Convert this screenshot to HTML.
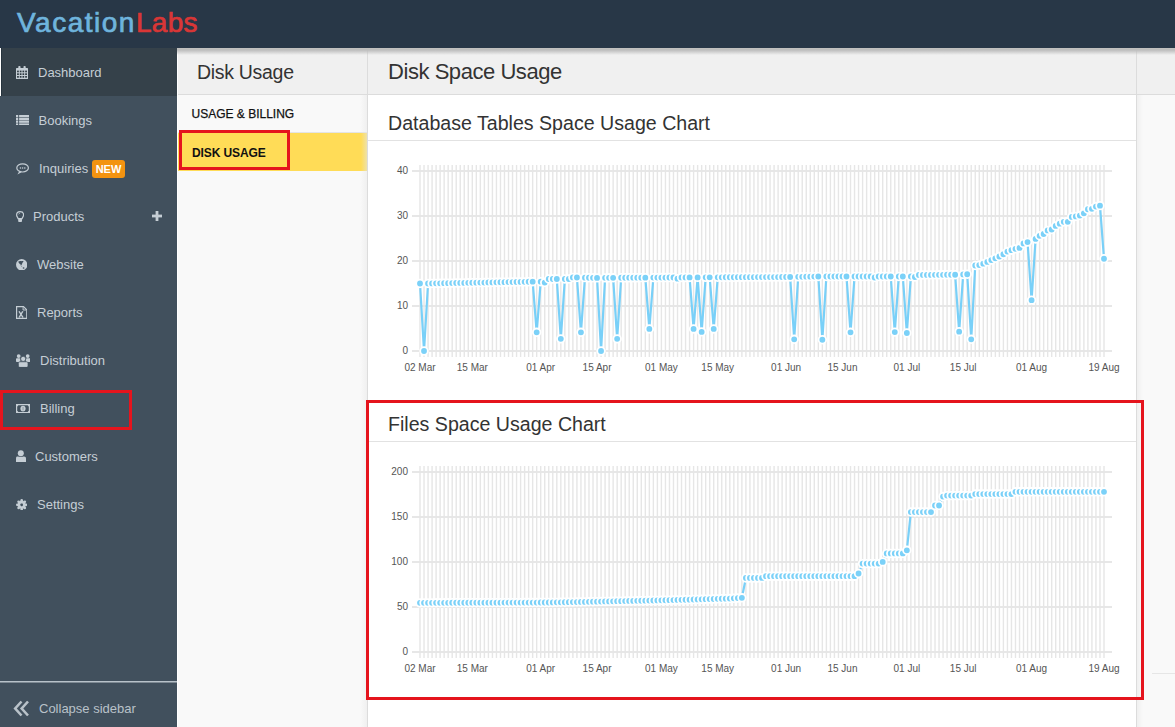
<!DOCTYPE html>
<html><head><meta charset="utf-8">
<style>
*{box-sizing:border-box;margin:0;padding:0}
html,body{width:1175px;height:727px;overflow:hidden;background:#f9f9f9;font-family:"Liberation Sans",sans-serif}
#hdr{position:absolute;left:0;top:0;width:1175px;height:48px;background:#283747;z-index:5}
#logo{position:absolute;left:17px;top:7px;font-weight:normal;white-space:nowrap;font-size:28px;line-height:32px;-webkit-text-stroke:0.7px}
#logo .v{color:#6fb4dd;letter-spacing:1.5px;-webkit-text-stroke-color:#6fb4dd}
#logo .l{color:#d93636;letter-spacing:0.3px;-webkit-text-stroke-color:#d93636}
#side{position:absolute;left:0;top:48px;width:177px;height:679px;background:#41505d}
.it{position:absolute;left:0;width:177px;height:48px;color:#c5ced5;font-size:13px}
.it span.t{position:absolute;top:17px;line-height:16px;white-space:nowrap}
.it svg{position:absolute}
.it.act{background:#35414a;border-left:1px solid #fff;box-shadow:inset 1px 0 0 #26333d}
#badge{position:absolute;left:92px;top:16px;width:33px;height:18px;background:#f39310;border-radius:3px;color:#fff;font-weight:bold;font-size:11px;line-height:18px;text-align:center}
#collapse{position:absolute;left:0;top:633px;width:177px;height:46px;border-top:1px solid #b8c2ca;box-shadow:inset 0 1px 0 #7e8a94;color:#b9c2c9;font-size:13px}
#col2{position:absolute;left:177px;top:48px;width:190px;height:679px;background:linear-gradient(90deg,#f9f9f9 0,#f9f9f9 182px,#f0f0f0 189px);border-left:1px solid #fff}
#col2 .h{position:absolute;left:0;top:0;width:190px;height:47px;background:#f0f0f0;border-bottom:1px solid #dcdcdc;font-size:19.5px;letter-spacing:-0.3px;color:#333;padding-left:19px;line-height:49px}
#col2 .a{position:absolute;left:13.5px;font-size:12px;color:#111;white-space:nowrap}
#yel{position:absolute;left:0;top:84px;width:189px;height:39px;border-top:1px solid #e4e4e4;background:linear-gradient(90deg,#ffdc57 0,#ffdc57 183px,#efe2a8 189px)}
#main{position:absolute;left:367px;top:48px;width:770px;height:679px;background:#fff;border-left:1px solid #dcdcdc;border-right:1px solid #dcdcdc}
#main .h{position:absolute;left:0;top:0;width:768px;height:47px;background:#f0f0f0;border-bottom:1px solid #dcdcdc;font-size:22px;letter-spacing:-0.45px;color:#333;padding-left:20px;line-height:47px}
.ct{position:absolute;left:0;width:768px;height:46px;border-bottom:1px solid #e2e2e2;font-size:19.6px;color:#333;padding-left:21px}
.ct span{position:absolute;left:20px;top:16.5px;line-height:22px;white-space:nowrap}
#right{position:absolute;left:1137px;top:48px;width:38px;height:679px;background:#f9f9f9}
#shadow{position:absolute;left:177px;top:48px;width:998px;height:7px;background:linear-gradient(#c2c1bf 0,#bdbdbd 2px,rgba(240,240,240,0) 7px);z-index:4}
#svg{position:absolute;left:0;top:0;z-index:3}
.hg{stroke:#e7e7e7;stroke-width:2}
.vg{stroke:#e6e6e6;stroke-width:1.4}
.yl,.xl{font-family:"Liberation Sans",sans-serif;font-size:10px;fill:#555}
.ln{fill:none;stroke:#79d0f8;stroke-width:2.2;stroke-linejoin:round}
.pt{fill:#7bd1f8;stroke:#fff;stroke-width:1.8}
.red{position:absolute;border:3px solid #e5141d;z-index:6}
</style></head><body>
<div id="hdr"><div id="logo"><span class="v">Vacation</span><span class="l">Labs</span></div></div>
<div id="side">
  <div class="it act" style="top:0"><svg style="left:15px;top:18px" width="12" height="13" viewBox="0 0 12 13"><rect x="0" y="2" width="12" height="11" rx=".6" fill="#c5ced5"/><g fill="#2c3840"><rect x="1.1" y="4.6" width="1.7" height="1.7"/><rect x="3.8" y="4.6" width="1.7" height="1.7"/><rect x="6.5" y="4.6" width="1.7" height="1.7"/><rect x="9.2" y="4.6" width="1.7" height="1.7"/><rect x="1.1" y="7.3" width="1.7" height="1.7"/><rect x="3.8" y="7.3" width="1.7" height="1.7"/><rect x="6.5" y="7.3" width="1.7" height="1.7"/><rect x="9.2" y="7.3" width="1.7" height="1.7"/><rect x="1.1" y="10" width="1.7" height="1.7"/><rect x="3.8" y="10" width="1.7" height="1.7"/><rect x="6.5" y="10" width="1.7" height="1.7"/><rect x="9.2" y="10" width="1.7" height="1.7"/></g><g fill="#c5ced5"><rect x="2.3" y="0" width="2.2" height="3.4" rx=".8"/><rect x="7.5" y="0" width="2.2" height="3.4" rx=".8"/></g></svg><span class="t" style="left:37px">Dashboard</span></div>
  <div class="it" style="top:48px"><svg style="left:16px;top:18.7px" width="13" height="10.5" viewBox="0 0 13 10.5"><g fill="#c5ced5"><rect x="0" y="0" width="2.2" height="2.4"/><rect x="3.1" y="0" width="9.9" height="2.4"/><rect x="0" y="3" width="2.2" height="2.2"/><rect x="3.1" y="3" width="9.9" height="2.2"/><rect x="0" y="5.6" width="2.2" height="2.2"/><rect x="3.1" y="5.6" width="9.9" height="2.2"/><rect x="0" y="8.4" width="2.2" height="2.1"/><rect x="3.1" y="8.4" width="9.9" height="2.1"/></g></svg><span class="t" style="left:38.5px">Bookings</span></div>
  <div class="it" style="top:96px"><svg style="left:16px;top:19px" width="13" height="12" viewBox="0 0 13 12"><ellipse cx="6.6" cy="4.9" rx="5.8" ry="4.1" fill="none" stroke="#c5ced5" stroke-width="1.2"/><path d="M3.3 8.2L1.4 11.4 5.6 9.3z" fill="#c5ced5"/><circle cx="4.4" cy="5" r=".8" fill="#c5ced5"/><circle cx="6.6" cy="5" r=".8" fill="#c5ced5"/><circle cx="8.8" cy="5" r=".8" fill="#c5ced5"/></svg><span class="t" style="left:39px">Inquiries</span><div id="badge">NEW</div></div>
  <div class="it" style="top:144px"><svg style="left:16px;top:18.5px" width="8.2" height="11.5" viewBox="0 0 8.2 11.5"><path d="M4.1.6C2.1.6.6 2.1.6 3.9c0 1.5 1.2 2.4 1.5 3.7h4C6.4 6.3 7.6 5.4 7.6 3.9 7.6 2.1 6.1.6 4.1.6z" fill="none" stroke="#c5ced5" stroke-width="1.2"/><path d="M2.2 7.4h3.8v2.6c0 .8-.9 1.5-1.9 1.5s-1.9-.7-1.9-1.5z" fill="#c5ced5"/><path d="M2.6 3.3c.3-.8.9-1.2 1.6-1.3" stroke="#c5ced5" stroke-width=".8" fill="none"/></svg><span class="t" style="left:33px">Products</span><svg style="left:152px;top:19px" width="10" height="10" viewBox="0 0 10 10"><rect x="3.6" y="0" width="2.8" height="10" fill="#c5ced5"/><rect x="0" y="3.6" width="10" height="2.8" fill="#c5ced5"/></svg></div>
  <div class="it" style="top:192px"><svg style="left:16px;top:18.6px" width="11.4" height="11.6" viewBox="0 0 11.4 11.6"><circle cx="5.7" cy="5.8" r="5.7" fill="#c5ced5"/><path d="M2.3 2.6c.9-.7 1.9-.8 2.7-.5.9.2 1.7-.4 2.6.2-.2.6-.8 1-1.1 1.5-.5.8-.5 1.8-1.2 2.5-.6-.5-1-1.3-1.7-1.6C2.9 4.4 2.5 3.6 2.3 2.6z" fill="#41505d"/><ellipse cx="7.6" cy="9" rx=".9" ry=".7" fill="#41505d"/><path d="M4.6 6.5l1.6 1.3" stroke="#41505d" stroke-width=".5"/></svg><span class="t" style="left:37px">Website</span></div>
  <div class="it" style="top:240px"><svg style="left:16px;top:18px" width="11.4" height="13" viewBox="0 0 11.4 13"><path d="M.6.6h6.9l3.3 3.3v8.5H.6z" fill="none" stroke="#c5ced5" stroke-width="1.2"/><path d="M7.1 1.2v2.8h2.9" fill="none" stroke="#c5ced5" stroke-width="1"/><path d="M3.2 5.6l3.6 5.6 M6.6 5.6L3.3 11.2" stroke="#c5ced5" stroke-width="1.3"/><path d="M2.6 11.2h1.6 M5.9 11.2h1.6 M2.6 5.6h1.4 M6 5.6h1.4" stroke="#c5ced5" stroke-width=".7"/></svg><span class="t" style="left:37px">Reports</span></div>
  <div class="it" style="top:288px"><svg style="left:16px;top:17.5px" width="14.4" height="13.6" viewBox="0 0 14.4 13.6"><g fill="#c5ced5"><circle cx="2.7" cy="2.1" r="1.9"/><circle cx="11.7" cy="2.1" r="1.9"/><rect x="0" y="4.2" width="4.4" height="3.8" rx=".8"/><rect x="10" y="4.2" width="4.4" height="3.8" rx=".8"/></g><circle cx="7.2" cy="4.9" r="2.6" fill="#c5ced5" stroke="#41505d" stroke-width=".8"/><rect x="2.4" y="7.8" width="9.6" height="5.6" rx="1.4" fill="#c5ced5" stroke="#41505d" stroke-width=".7"/></svg><span class="t" style="left:40px">Distribution</span></div>
  <div class="it" style="top:336px"><svg style="left:16px;top:19.6px" width="14" height="9.2" viewBox="0 0 14 9.2"><rect x="0" y="0" width="14" height="9.2" fill="#c5ced5"/><path d="M2.3 1.2h9.4l1.1 1.6v3.6l-1.1 1.6H2.3L1.2 6.4V2.8z" fill="#41505d"/><ellipse cx="7" cy="4.6" rx="2.6" ry="2.9" fill="#c5ced5"/><rect x="6.6" y="2.9" width=".9" height="3.4" fill="#41505d" opacity=".45"/></svg><span class="t" style="left:40px">Billing</span></div>
  <div class="it" style="top:384px"><svg style="left:16px;top:18px" width="10" height="12" viewBox="0 0 10 12"><g fill="#c5ced5"><circle cx="4.8" cy="3.2" r="3"/><path d="M1.5 6.6h6.6C9.3 6.6 10 7.4 10 8.6V12H0V8.2C0 7.3.6 6.6 1.5 6.6z"/></g><path d="M2.5 6.5h4.6" stroke="#41505d" stroke-width=".5"/></svg><span class="t" style="left:35px">Customers</span></div>
  <div class="it" style="top:432px"><svg style="left:16px;top:18.6px" width="11.4" height="11.6" viewBox="0 0 12 12"><g fill="#c5ced5" transform="translate(6 6)"><circle r="4.2"/><circle cx="0" cy="-4.6" r="1.4"/><circle cx="0" cy="4.6" r="1.4"/><circle cx="-4.6" cy="0" r="1.4"/><circle cx="4.6" cy="0" r="1.4"/><circle cx="3.25" cy="3.25" r="1.4"/><circle cx="-3.25" cy="3.25" r="1.4"/><circle cx="3.25" cy="-3.25" r="1.4"/><circle cx="-3.25" cy="-3.25" r="1.4"/></g><rect x="4.7" y="4.6" width="2.6" height="2.8" rx=".8" fill="#41505d"/></svg><span class="t" style="left:37px">Settings</span></div>
  <div id="collapse"><svg style="position:absolute;left:13px;top:18px" width="17" height="17" viewBox="0 0 17 17"><path d="M8.5 1.5L2.2 8.5l6.3 7 M15 1.5L8.7 8.5l6.3 7" fill="none" stroke="#b9c2c9" stroke-width="2.6"/></svg><span style="position:absolute;left:39px;top:19px;line-height:16px;white-space:nowrap">Collapse sidebar</span></div>
</div>
<div id="col2">
  <div class="h">Disk Usage</div>
  <div class="a" style="top:58px;line-height:16px;-webkit-text-stroke:0.25px #111">USAGE &amp; BILLING</div>
  <div id="yel"></div>
  <div class="a" style="top:97px;left:14px;line-height:16px;font-weight:bold;letter-spacing:-0.1px">DISK USAGE</div>
</div>
<div id="main">
  <div class="h">Disk Space Usage</div>
  <div class="ct" style="top:47px"><span>Database Tables Space Usage Chart</span></div>
  <div class="ct" style="top:348px"><span>Files Space Usage Chart</span></div>
</div>
<div id="right"><div style="position:absolute;left:0;top:0;width:38px;height:47px;background:#f0f0f0;border-bottom:1px solid #dcdcdc"></div><div style="position:absolute;left:0;top:47px;width:6px;height:632px;background:linear-gradient(90deg,#f0f0f0,#f9f9f9)"></div><div style="position:absolute;left:15px;top:625px;width:23px;height:1px;background:#e6e6e6"></div></div>
<div id="shadow"></div>
<svg id="svg" width="1175" height="727" viewBox="0 0 1175 727">
<line x1="412" y1="171" x2="1112" y2="171" class="hg"/>
<line x1="412" y1="216" x2="1112" y2="216" class="hg"/>
<line x1="412" y1="261" x2="1112" y2="261" class="hg"/>
<line x1="412" y1="306" x2="1112" y2="306" class="hg"/>
<line x1="412" y1="351" x2="1112" y2="351" class="hg"/>
<line x1="420.00" y1="165" x2="420.00" y2="357" class="vg"/>
<line x1="424.02" y1="165" x2="424.02" y2="357" class="vg"/>
<line x1="428.05" y1="165" x2="428.05" y2="357" class="vg"/>
<line x1="432.07" y1="165" x2="432.07" y2="357" class="vg"/>
<line x1="436.09" y1="165" x2="436.09" y2="357" class="vg"/>
<line x1="440.12" y1="165" x2="440.12" y2="357" class="vg"/>
<line x1="444.14" y1="165" x2="444.14" y2="357" class="vg"/>
<line x1="448.16" y1="165" x2="448.16" y2="357" class="vg"/>
<line x1="452.19" y1="165" x2="452.19" y2="357" class="vg"/>
<line x1="456.21" y1="165" x2="456.21" y2="357" class="vg"/>
<line x1="460.24" y1="165" x2="460.24" y2="357" class="vg"/>
<line x1="464.26" y1="165" x2="464.26" y2="357" class="vg"/>
<line x1="468.28" y1="165" x2="468.28" y2="357" class="vg"/>
<line x1="472.31" y1="165" x2="472.31" y2="357" class="vg"/>
<line x1="476.33" y1="165" x2="476.33" y2="357" class="vg"/>
<line x1="480.35" y1="165" x2="480.35" y2="357" class="vg"/>
<line x1="484.38" y1="165" x2="484.38" y2="357" class="vg"/>
<line x1="488.40" y1="165" x2="488.40" y2="357" class="vg"/>
<line x1="492.42" y1="165" x2="492.42" y2="357" class="vg"/>
<line x1="496.45" y1="165" x2="496.45" y2="357" class="vg"/>
<line x1="500.47" y1="165" x2="500.47" y2="357" class="vg"/>
<line x1="504.49" y1="165" x2="504.49" y2="357" class="vg"/>
<line x1="508.52" y1="165" x2="508.52" y2="357" class="vg"/>
<line x1="512.54" y1="165" x2="512.54" y2="357" class="vg"/>
<line x1="516.56" y1="165" x2="516.56" y2="357" class="vg"/>
<line x1="520.59" y1="165" x2="520.59" y2="357" class="vg"/>
<line x1="524.61" y1="165" x2="524.61" y2="357" class="vg"/>
<line x1="528.64" y1="165" x2="528.64" y2="357" class="vg"/>
<line x1="532.66" y1="165" x2="532.66" y2="357" class="vg"/>
<line x1="536.68" y1="165" x2="536.68" y2="357" class="vg"/>
<line x1="540.71" y1="165" x2="540.71" y2="357" class="vg"/>
<line x1="544.73" y1="165" x2="544.73" y2="357" class="vg"/>
<line x1="548.75" y1="165" x2="548.75" y2="357" class="vg"/>
<line x1="552.78" y1="165" x2="552.78" y2="357" class="vg"/>
<line x1="556.80" y1="165" x2="556.80" y2="357" class="vg"/>
<line x1="560.82" y1="165" x2="560.82" y2="357" class="vg"/>
<line x1="564.85" y1="165" x2="564.85" y2="357" class="vg"/>
<line x1="568.87" y1="165" x2="568.87" y2="357" class="vg"/>
<line x1="572.89" y1="165" x2="572.89" y2="357" class="vg"/>
<line x1="576.92" y1="165" x2="576.92" y2="357" class="vg"/>
<line x1="580.94" y1="165" x2="580.94" y2="357" class="vg"/>
<line x1="584.96" y1="165" x2="584.96" y2="357" class="vg"/>
<line x1="588.99" y1="165" x2="588.99" y2="357" class="vg"/>
<line x1="593.01" y1="165" x2="593.01" y2="357" class="vg"/>
<line x1="597.04" y1="165" x2="597.04" y2="357" class="vg"/>
<line x1="601.06" y1="165" x2="601.06" y2="357" class="vg"/>
<line x1="605.08" y1="165" x2="605.08" y2="357" class="vg"/>
<line x1="609.11" y1="165" x2="609.11" y2="357" class="vg"/>
<line x1="613.13" y1="165" x2="613.13" y2="357" class="vg"/>
<line x1="617.15" y1="165" x2="617.15" y2="357" class="vg"/>
<line x1="621.18" y1="165" x2="621.18" y2="357" class="vg"/>
<line x1="625.20" y1="165" x2="625.20" y2="357" class="vg"/>
<line x1="629.22" y1="165" x2="629.22" y2="357" class="vg"/>
<line x1="633.25" y1="165" x2="633.25" y2="357" class="vg"/>
<line x1="637.27" y1="165" x2="637.27" y2="357" class="vg"/>
<line x1="641.29" y1="165" x2="641.29" y2="357" class="vg"/>
<line x1="645.32" y1="165" x2="645.32" y2="357" class="vg"/>
<line x1="649.34" y1="165" x2="649.34" y2="357" class="vg"/>
<line x1="653.36" y1="165" x2="653.36" y2="357" class="vg"/>
<line x1="657.39" y1="165" x2="657.39" y2="357" class="vg"/>
<line x1="661.41" y1="165" x2="661.41" y2="357" class="vg"/>
<line x1="665.44" y1="165" x2="665.44" y2="357" class="vg"/>
<line x1="669.46" y1="165" x2="669.46" y2="357" class="vg"/>
<line x1="673.48" y1="165" x2="673.48" y2="357" class="vg"/>
<line x1="677.51" y1="165" x2="677.51" y2="357" class="vg"/>
<line x1="681.53" y1="165" x2="681.53" y2="357" class="vg"/>
<line x1="685.55" y1="165" x2="685.55" y2="357" class="vg"/>
<line x1="689.58" y1="165" x2="689.58" y2="357" class="vg"/>
<line x1="693.60" y1="165" x2="693.60" y2="357" class="vg"/>
<line x1="697.62" y1="165" x2="697.62" y2="357" class="vg"/>
<line x1="701.65" y1="165" x2="701.65" y2="357" class="vg"/>
<line x1="705.67" y1="165" x2="705.67" y2="357" class="vg"/>
<line x1="709.69" y1="165" x2="709.69" y2="357" class="vg"/>
<line x1="713.72" y1="165" x2="713.72" y2="357" class="vg"/>
<line x1="717.74" y1="165" x2="717.74" y2="357" class="vg"/>
<line x1="721.76" y1="165" x2="721.76" y2="357" class="vg"/>
<line x1="725.79" y1="165" x2="725.79" y2="357" class="vg"/>
<line x1="729.81" y1="165" x2="729.81" y2="357" class="vg"/>
<line x1="733.84" y1="165" x2="733.84" y2="357" class="vg"/>
<line x1="737.86" y1="165" x2="737.86" y2="357" class="vg"/>
<line x1="741.88" y1="165" x2="741.88" y2="357" class="vg"/>
<line x1="745.91" y1="165" x2="745.91" y2="357" class="vg"/>
<line x1="749.93" y1="165" x2="749.93" y2="357" class="vg"/>
<line x1="753.95" y1="165" x2="753.95" y2="357" class="vg"/>
<line x1="757.98" y1="165" x2="757.98" y2="357" class="vg"/>
<line x1="762.00" y1="165" x2="762.00" y2="357" class="vg"/>
<line x1="766.02" y1="165" x2="766.02" y2="357" class="vg"/>
<line x1="770.05" y1="165" x2="770.05" y2="357" class="vg"/>
<line x1="774.07" y1="165" x2="774.07" y2="357" class="vg"/>
<line x1="778.09" y1="165" x2="778.09" y2="357" class="vg"/>
<line x1="782.12" y1="165" x2="782.12" y2="357" class="vg"/>
<line x1="786.14" y1="165" x2="786.14" y2="357" class="vg"/>
<line x1="790.16" y1="165" x2="790.16" y2="357" class="vg"/>
<line x1="794.19" y1="165" x2="794.19" y2="357" class="vg"/>
<line x1="798.21" y1="165" x2="798.21" y2="357" class="vg"/>
<line x1="802.24" y1="165" x2="802.24" y2="357" class="vg"/>
<line x1="806.26" y1="165" x2="806.26" y2="357" class="vg"/>
<line x1="810.28" y1="165" x2="810.28" y2="357" class="vg"/>
<line x1="814.31" y1="165" x2="814.31" y2="357" class="vg"/>
<line x1="818.33" y1="165" x2="818.33" y2="357" class="vg"/>
<line x1="822.35" y1="165" x2="822.35" y2="357" class="vg"/>
<line x1="826.38" y1="165" x2="826.38" y2="357" class="vg"/>
<line x1="830.40" y1="165" x2="830.40" y2="357" class="vg"/>
<line x1="834.42" y1="165" x2="834.42" y2="357" class="vg"/>
<line x1="838.45" y1="165" x2="838.45" y2="357" class="vg"/>
<line x1="842.47" y1="165" x2="842.47" y2="357" class="vg"/>
<line x1="846.49" y1="165" x2="846.49" y2="357" class="vg"/>
<line x1="850.52" y1="165" x2="850.52" y2="357" class="vg"/>
<line x1="854.54" y1="165" x2="854.54" y2="357" class="vg"/>
<line x1="858.56" y1="165" x2="858.56" y2="357" class="vg"/>
<line x1="862.59" y1="165" x2="862.59" y2="357" class="vg"/>
<line x1="866.61" y1="165" x2="866.61" y2="357" class="vg"/>
<line x1="870.64" y1="165" x2="870.64" y2="357" class="vg"/>
<line x1="874.66" y1="165" x2="874.66" y2="357" class="vg"/>
<line x1="878.68" y1="165" x2="878.68" y2="357" class="vg"/>
<line x1="882.71" y1="165" x2="882.71" y2="357" class="vg"/>
<line x1="886.73" y1="165" x2="886.73" y2="357" class="vg"/>
<line x1="890.75" y1="165" x2="890.75" y2="357" class="vg"/>
<line x1="894.78" y1="165" x2="894.78" y2="357" class="vg"/>
<line x1="898.80" y1="165" x2="898.80" y2="357" class="vg"/>
<line x1="902.82" y1="165" x2="902.82" y2="357" class="vg"/>
<line x1="906.85" y1="165" x2="906.85" y2="357" class="vg"/>
<line x1="910.87" y1="165" x2="910.87" y2="357" class="vg"/>
<line x1="914.89" y1="165" x2="914.89" y2="357" class="vg"/>
<line x1="918.92" y1="165" x2="918.92" y2="357" class="vg"/>
<line x1="922.94" y1="165" x2="922.94" y2="357" class="vg"/>
<line x1="926.96" y1="165" x2="926.96" y2="357" class="vg"/>
<line x1="930.99" y1="165" x2="930.99" y2="357" class="vg"/>
<line x1="935.01" y1="165" x2="935.01" y2="357" class="vg"/>
<line x1="939.04" y1="165" x2="939.04" y2="357" class="vg"/>
<line x1="943.06" y1="165" x2="943.06" y2="357" class="vg"/>
<line x1="947.08" y1="165" x2="947.08" y2="357" class="vg"/>
<line x1="951.11" y1="165" x2="951.11" y2="357" class="vg"/>
<line x1="955.13" y1="165" x2="955.13" y2="357" class="vg"/>
<line x1="959.15" y1="165" x2="959.15" y2="357" class="vg"/>
<line x1="963.18" y1="165" x2="963.18" y2="357" class="vg"/>
<line x1="967.20" y1="165" x2="967.20" y2="357" class="vg"/>
<line x1="971.22" y1="165" x2="971.22" y2="357" class="vg"/>
<line x1="975.25" y1="165" x2="975.25" y2="357" class="vg"/>
<line x1="979.27" y1="165" x2="979.27" y2="357" class="vg"/>
<line x1="983.29" y1="165" x2="983.29" y2="357" class="vg"/>
<line x1="987.32" y1="165" x2="987.32" y2="357" class="vg"/>
<line x1="991.34" y1="165" x2="991.34" y2="357" class="vg"/>
<line x1="995.36" y1="165" x2="995.36" y2="357" class="vg"/>
<line x1="999.39" y1="165" x2="999.39" y2="357" class="vg"/>
<line x1="1003.41" y1="165" x2="1003.41" y2="357" class="vg"/>
<line x1="1007.44" y1="165" x2="1007.44" y2="357" class="vg"/>
<line x1="1011.46" y1="165" x2="1011.46" y2="357" class="vg"/>
<line x1="1015.48" y1="165" x2="1015.48" y2="357" class="vg"/>
<line x1="1019.51" y1="165" x2="1019.51" y2="357" class="vg"/>
<line x1="1023.53" y1="165" x2="1023.53" y2="357" class="vg"/>
<line x1="1027.55" y1="165" x2="1027.55" y2="357" class="vg"/>
<line x1="1031.58" y1="165" x2="1031.58" y2="357" class="vg"/>
<line x1="1035.60" y1="165" x2="1035.60" y2="357" class="vg"/>
<line x1="1039.62" y1="165" x2="1039.62" y2="357" class="vg"/>
<line x1="1043.65" y1="165" x2="1043.65" y2="357" class="vg"/>
<line x1="1047.67" y1="165" x2="1047.67" y2="357" class="vg"/>
<line x1="1051.69" y1="165" x2="1051.69" y2="357" class="vg"/>
<line x1="1055.72" y1="165" x2="1055.72" y2="357" class="vg"/>
<line x1="1059.74" y1="165" x2="1059.74" y2="357" class="vg"/>
<line x1="1063.76" y1="165" x2="1063.76" y2="357" class="vg"/>
<line x1="1067.79" y1="165" x2="1067.79" y2="357" class="vg"/>
<line x1="1071.81" y1="165" x2="1071.81" y2="357" class="vg"/>
<line x1="1075.84" y1="165" x2="1075.84" y2="357" class="vg"/>
<line x1="1079.86" y1="165" x2="1079.86" y2="357" class="vg"/>
<line x1="1083.88" y1="165" x2="1083.88" y2="357" class="vg"/>
<line x1="1087.91" y1="165" x2="1087.91" y2="357" class="vg"/>
<line x1="1091.93" y1="165" x2="1091.93" y2="357" class="vg"/>
<line x1="1095.95" y1="165" x2="1095.95" y2="357" class="vg"/>
<line x1="1099.98" y1="165" x2="1099.98" y2="357" class="vg"/>
<line x1="1104.00" y1="165" x2="1104.00" y2="357" class="vg"/>
<text x="408" y="174.2" text-anchor="end" class="yl">40</text>
<text x="408" y="219.2" text-anchor="end" class="yl">30</text>
<text x="408" y="264.2" text-anchor="end" class="yl">20</text>
<text x="408" y="309.2" text-anchor="end" class="yl">10</text>
<text x="408" y="354.2" text-anchor="end" class="yl">0</text>
<text x="420.00" y="370.8" text-anchor="middle" class="xl">02 Mar</text>
<text x="472.31" y="370.8" text-anchor="middle" class="xl">15 Mar</text>
<text x="540.71" y="370.8" text-anchor="middle" class="xl">01 Apr</text>
<text x="597.04" y="370.8" text-anchor="middle" class="xl">15 Apr</text>
<text x="661.41" y="370.8" text-anchor="middle" class="xl">01 May</text>
<text x="717.74" y="370.8" text-anchor="middle" class="xl">15 May</text>
<text x="786.14" y="370.8" text-anchor="middle" class="xl">01 Jun</text>
<text x="842.47" y="370.8" text-anchor="middle" class="xl">15 Jun</text>
<text x="906.85" y="370.8" text-anchor="middle" class="xl">01 Jul</text>
<text x="963.18" y="370.8" text-anchor="middle" class="xl">15 Jul</text>
<text x="1031.58" y="370.8" text-anchor="middle" class="xl">01 Aug</text>
<text x="1104.00" y="370.8" text-anchor="middle" class="xl">19 Aug</text>
<polyline points="420.00,283.50 424.02,351.00 428.05,283.50 432.07,283.43 436.09,283.36 440.12,283.29 444.14,283.22 448.16,283.15 452.19,283.08 456.21,283.02 460.24,282.95 464.26,282.88 468.28,282.81 472.31,282.74 476.33,282.67 480.35,282.60 484.38,282.53 488.40,282.46 492.42,282.39 496.45,282.32 500.47,282.25 504.49,282.18 508.52,282.12 512.54,282.05 516.56,281.98 520.59,281.91 524.61,281.84 528.64,281.77 532.66,281.70 536.68,332.32 540.71,281.70 544.73,282.60 548.75,279.00 552.78,279.00 556.80,279.00 560.82,338.85 564.85,279.00 568.87,279.00 572.89,277.43 576.92,277.50 580.94,332.32 584.96,277.65 588.99,277.73 593.01,277.80 597.04,277.88 601.06,351.00 605.08,277.84 609.11,277.82 613.13,277.80 617.15,338.85 621.18,277.76 625.20,277.74 629.22,277.72 633.25,277.70 637.27,277.68 641.29,277.66 645.32,277.64 649.34,328.95 653.36,277.60 657.39,277.58 661.41,277.56 665.44,277.54 669.46,277.52 673.48,277.50 677.51,278.70 681.53,277.46 685.55,277.44 689.58,277.43 693.60,328.95 697.62,277.39 701.65,331.88 705.67,277.35 709.69,277.33 713.72,328.95 717.74,277.30 721.76,277.28 725.79,277.26 729.81,277.25 733.84,277.23 737.86,277.21 741.88,277.19 745.91,277.17 749.93,277.15 753.95,277.14 757.98,277.12 762.00,277.10 766.02,277.08 770.05,277.06 774.07,277.05 778.09,277.03 782.12,277.01 786.14,276.99 790.16,276.98 794.19,339.30 798.21,276.85 802.24,276.78 806.26,276.72 810.28,276.65 814.31,276.59 818.33,276.52 822.35,339.75 826.38,276.52 830.40,276.52 834.42,276.52 838.45,276.52 842.47,276.52 846.49,276.52 850.52,332.32 854.54,276.52 858.56,276.52 862.59,276.52 866.61,276.52 870.64,276.52 874.66,277.51 878.68,276.52 882.71,276.52 886.73,276.52 890.75,276.52 894.78,332.10 898.80,276.52 902.82,276.52 906.85,333.00 910.87,276.52 914.89,276.98 918.92,274.95 922.94,274.93 926.96,274.90 930.99,274.88 935.01,274.85 939.04,274.82 943.06,274.80 947.08,274.77 951.11,274.75 955.13,274.73 959.15,331.65 963.18,274.43 967.20,274.27 971.22,339.30 975.25,265.50 979.27,265.05 983.29,263.70 987.32,261.90 991.34,260.10 995.36,258.30 999.39,256.50 1003.41,254.25 1007.44,251.55 1011.46,250.20 1015.48,248.85 1019.51,247.95 1023.53,243.45 1027.55,242.10 1031.58,300.15 1035.60,238.95 1039.62,235.80 1043.65,234.00 1047.67,230.40 1051.69,229.50 1055.72,225.90 1059.74,223.65 1063.76,221.85 1067.79,221.85 1071.81,216.90 1075.84,216.45 1079.86,215.55 1083.88,213.30 1087.91,209.25 1091.93,208.80 1095.95,206.55 1099.98,205.65 1104.00,258.75" class="ln"/>
<circle cx="420.00" cy="283.50" r="3.8" class="pt"/>
<circle cx="424.02" cy="351.00" r="3.8" class="pt"/>
<circle cx="428.05" cy="283.50" r="3.8" class="pt"/>
<circle cx="432.07" cy="283.43" r="3.8" class="pt"/>
<circle cx="436.09" cy="283.36" r="3.8" class="pt"/>
<circle cx="440.12" cy="283.29" r="3.8" class="pt"/>
<circle cx="444.14" cy="283.22" r="3.8" class="pt"/>
<circle cx="448.16" cy="283.15" r="3.8" class="pt"/>
<circle cx="452.19" cy="283.08" r="3.8" class="pt"/>
<circle cx="456.21" cy="283.02" r="3.8" class="pt"/>
<circle cx="460.24" cy="282.95" r="3.8" class="pt"/>
<circle cx="464.26" cy="282.88" r="3.8" class="pt"/>
<circle cx="468.28" cy="282.81" r="3.8" class="pt"/>
<circle cx="472.31" cy="282.74" r="3.8" class="pt"/>
<circle cx="476.33" cy="282.67" r="3.8" class="pt"/>
<circle cx="480.35" cy="282.60" r="3.8" class="pt"/>
<circle cx="484.38" cy="282.53" r="3.8" class="pt"/>
<circle cx="488.40" cy="282.46" r="3.8" class="pt"/>
<circle cx="492.42" cy="282.39" r="3.8" class="pt"/>
<circle cx="496.45" cy="282.32" r="3.8" class="pt"/>
<circle cx="500.47" cy="282.25" r="3.8" class="pt"/>
<circle cx="504.49" cy="282.18" r="3.8" class="pt"/>
<circle cx="508.52" cy="282.12" r="3.8" class="pt"/>
<circle cx="512.54" cy="282.05" r="3.8" class="pt"/>
<circle cx="516.56" cy="281.98" r="3.8" class="pt"/>
<circle cx="520.59" cy="281.91" r="3.8" class="pt"/>
<circle cx="524.61" cy="281.84" r="3.8" class="pt"/>
<circle cx="528.64" cy="281.77" r="3.8" class="pt"/>
<circle cx="532.66" cy="281.70" r="3.8" class="pt"/>
<circle cx="536.68" cy="332.32" r="3.8" class="pt"/>
<circle cx="540.71" cy="281.70" r="3.8" class="pt"/>
<circle cx="544.73" cy="282.60" r="3.8" class="pt"/>
<circle cx="548.75" cy="279.00" r="3.8" class="pt"/>
<circle cx="552.78" cy="279.00" r="3.8" class="pt"/>
<circle cx="556.80" cy="279.00" r="3.8" class="pt"/>
<circle cx="560.82" cy="338.85" r="3.8" class="pt"/>
<circle cx="564.85" cy="279.00" r="3.8" class="pt"/>
<circle cx="568.87" cy="279.00" r="3.8" class="pt"/>
<circle cx="572.89" cy="277.43" r="3.8" class="pt"/>
<circle cx="576.92" cy="277.50" r="3.8" class="pt"/>
<circle cx="580.94" cy="332.32" r="3.8" class="pt"/>
<circle cx="584.96" cy="277.65" r="3.8" class="pt"/>
<circle cx="588.99" cy="277.73" r="3.8" class="pt"/>
<circle cx="593.01" cy="277.80" r="3.8" class="pt"/>
<circle cx="597.04" cy="277.88" r="3.8" class="pt"/>
<circle cx="601.06" cy="351.00" r="3.8" class="pt"/>
<circle cx="605.08" cy="277.84" r="3.8" class="pt"/>
<circle cx="609.11" cy="277.82" r="3.8" class="pt"/>
<circle cx="613.13" cy="277.80" r="3.8" class="pt"/>
<circle cx="617.15" cy="338.85" r="3.8" class="pt"/>
<circle cx="621.18" cy="277.76" r="3.8" class="pt"/>
<circle cx="625.20" cy="277.74" r="3.8" class="pt"/>
<circle cx="629.22" cy="277.72" r="3.8" class="pt"/>
<circle cx="633.25" cy="277.70" r="3.8" class="pt"/>
<circle cx="637.27" cy="277.68" r="3.8" class="pt"/>
<circle cx="641.29" cy="277.66" r="3.8" class="pt"/>
<circle cx="645.32" cy="277.64" r="3.8" class="pt"/>
<circle cx="649.34" cy="328.95" r="3.8" class="pt"/>
<circle cx="653.36" cy="277.60" r="3.8" class="pt"/>
<circle cx="657.39" cy="277.58" r="3.8" class="pt"/>
<circle cx="661.41" cy="277.56" r="3.8" class="pt"/>
<circle cx="665.44" cy="277.54" r="3.8" class="pt"/>
<circle cx="669.46" cy="277.52" r="3.8" class="pt"/>
<circle cx="673.48" cy="277.50" r="3.8" class="pt"/>
<circle cx="677.51" cy="278.70" r="3.8" class="pt"/>
<circle cx="681.53" cy="277.46" r="3.8" class="pt"/>
<circle cx="685.55" cy="277.44" r="3.8" class="pt"/>
<circle cx="689.58" cy="277.43" r="3.8" class="pt"/>
<circle cx="693.60" cy="328.95" r="3.8" class="pt"/>
<circle cx="697.62" cy="277.39" r="3.8" class="pt"/>
<circle cx="701.65" cy="331.88" r="3.8" class="pt"/>
<circle cx="705.67" cy="277.35" r="3.8" class="pt"/>
<circle cx="709.69" cy="277.33" r="3.8" class="pt"/>
<circle cx="713.72" cy="328.95" r="3.8" class="pt"/>
<circle cx="717.74" cy="277.30" r="3.8" class="pt"/>
<circle cx="721.76" cy="277.28" r="3.8" class="pt"/>
<circle cx="725.79" cy="277.26" r="3.8" class="pt"/>
<circle cx="729.81" cy="277.25" r="3.8" class="pt"/>
<circle cx="733.84" cy="277.23" r="3.8" class="pt"/>
<circle cx="737.86" cy="277.21" r="3.8" class="pt"/>
<circle cx="741.88" cy="277.19" r="3.8" class="pt"/>
<circle cx="745.91" cy="277.17" r="3.8" class="pt"/>
<circle cx="749.93" cy="277.15" r="3.8" class="pt"/>
<circle cx="753.95" cy="277.14" r="3.8" class="pt"/>
<circle cx="757.98" cy="277.12" r="3.8" class="pt"/>
<circle cx="762.00" cy="277.10" r="3.8" class="pt"/>
<circle cx="766.02" cy="277.08" r="3.8" class="pt"/>
<circle cx="770.05" cy="277.06" r="3.8" class="pt"/>
<circle cx="774.07" cy="277.05" r="3.8" class="pt"/>
<circle cx="778.09" cy="277.03" r="3.8" class="pt"/>
<circle cx="782.12" cy="277.01" r="3.8" class="pt"/>
<circle cx="786.14" cy="276.99" r="3.8" class="pt"/>
<circle cx="790.16" cy="276.98" r="3.8" class="pt"/>
<circle cx="794.19" cy="339.30" r="3.8" class="pt"/>
<circle cx="798.21" cy="276.85" r="3.8" class="pt"/>
<circle cx="802.24" cy="276.78" r="3.8" class="pt"/>
<circle cx="806.26" cy="276.72" r="3.8" class="pt"/>
<circle cx="810.28" cy="276.65" r="3.8" class="pt"/>
<circle cx="814.31" cy="276.59" r="3.8" class="pt"/>
<circle cx="818.33" cy="276.52" r="3.8" class="pt"/>
<circle cx="822.35" cy="339.75" r="3.8" class="pt"/>
<circle cx="826.38" cy="276.52" r="3.8" class="pt"/>
<circle cx="830.40" cy="276.52" r="3.8" class="pt"/>
<circle cx="834.42" cy="276.52" r="3.8" class="pt"/>
<circle cx="838.45" cy="276.52" r="3.8" class="pt"/>
<circle cx="842.47" cy="276.52" r="3.8" class="pt"/>
<circle cx="846.49" cy="276.52" r="3.8" class="pt"/>
<circle cx="850.52" cy="332.32" r="3.8" class="pt"/>
<circle cx="854.54" cy="276.52" r="3.8" class="pt"/>
<circle cx="858.56" cy="276.52" r="3.8" class="pt"/>
<circle cx="862.59" cy="276.52" r="3.8" class="pt"/>
<circle cx="866.61" cy="276.52" r="3.8" class="pt"/>
<circle cx="870.64" cy="276.52" r="3.8" class="pt"/>
<circle cx="874.66" cy="277.51" r="3.8" class="pt"/>
<circle cx="878.68" cy="276.52" r="3.8" class="pt"/>
<circle cx="882.71" cy="276.52" r="3.8" class="pt"/>
<circle cx="886.73" cy="276.52" r="3.8" class="pt"/>
<circle cx="890.75" cy="276.52" r="3.8" class="pt"/>
<circle cx="894.78" cy="332.10" r="3.8" class="pt"/>
<circle cx="898.80" cy="276.52" r="3.8" class="pt"/>
<circle cx="902.82" cy="276.52" r="3.8" class="pt"/>
<circle cx="906.85" cy="333.00" r="3.8" class="pt"/>
<circle cx="910.87" cy="276.52" r="3.8" class="pt"/>
<circle cx="914.89" cy="276.98" r="3.8" class="pt"/>
<circle cx="918.92" cy="274.95" r="3.8" class="pt"/>
<circle cx="922.94" cy="274.93" r="3.8" class="pt"/>
<circle cx="926.96" cy="274.90" r="3.8" class="pt"/>
<circle cx="930.99" cy="274.88" r="3.8" class="pt"/>
<circle cx="935.01" cy="274.85" r="3.8" class="pt"/>
<circle cx="939.04" cy="274.82" r="3.8" class="pt"/>
<circle cx="943.06" cy="274.80" r="3.8" class="pt"/>
<circle cx="947.08" cy="274.77" r="3.8" class="pt"/>
<circle cx="951.11" cy="274.75" r="3.8" class="pt"/>
<circle cx="955.13" cy="274.73" r="3.8" class="pt"/>
<circle cx="959.15" cy="331.65" r="3.8" class="pt"/>
<circle cx="963.18" cy="274.43" r="3.8" class="pt"/>
<circle cx="967.20" cy="274.27" r="3.8" class="pt"/>
<circle cx="971.22" cy="339.30" r="3.8" class="pt"/>
<circle cx="975.25" cy="265.50" r="3.8" class="pt"/>
<circle cx="979.27" cy="265.05" r="3.8" class="pt"/>
<circle cx="983.29" cy="263.70" r="3.8" class="pt"/>
<circle cx="987.32" cy="261.90" r="3.8" class="pt"/>
<circle cx="991.34" cy="260.10" r="3.8" class="pt"/>
<circle cx="995.36" cy="258.30" r="3.8" class="pt"/>
<circle cx="999.39" cy="256.50" r="3.8" class="pt"/>
<circle cx="1003.41" cy="254.25" r="3.8" class="pt"/>
<circle cx="1007.44" cy="251.55" r="3.8" class="pt"/>
<circle cx="1011.46" cy="250.20" r="3.8" class="pt"/>
<circle cx="1015.48" cy="248.85" r="3.8" class="pt"/>
<circle cx="1019.51" cy="247.95" r="3.8" class="pt"/>
<circle cx="1023.53" cy="243.45" r="3.8" class="pt"/>
<circle cx="1027.55" cy="242.10" r="3.8" class="pt"/>
<circle cx="1031.58" cy="300.15" r="3.8" class="pt"/>
<circle cx="1035.60" cy="238.95" r="3.8" class="pt"/>
<circle cx="1039.62" cy="235.80" r="3.8" class="pt"/>
<circle cx="1043.65" cy="234.00" r="3.8" class="pt"/>
<circle cx="1047.67" cy="230.40" r="3.8" class="pt"/>
<circle cx="1051.69" cy="229.50" r="3.8" class="pt"/>
<circle cx="1055.72" cy="225.90" r="3.8" class="pt"/>
<circle cx="1059.74" cy="223.65" r="3.8" class="pt"/>
<circle cx="1063.76" cy="221.85" r="3.8" class="pt"/>
<circle cx="1067.79" cy="221.85" r="3.8" class="pt"/>
<circle cx="1071.81" cy="216.90" r="3.8" class="pt"/>
<circle cx="1075.84" cy="216.45" r="3.8" class="pt"/>
<circle cx="1079.86" cy="215.55" r="3.8" class="pt"/>
<circle cx="1083.88" cy="213.30" r="3.8" class="pt"/>
<circle cx="1087.91" cy="209.25" r="3.8" class="pt"/>
<circle cx="1091.93" cy="208.80" r="3.8" class="pt"/>
<circle cx="1095.95" cy="206.55" r="3.8" class="pt"/>
<circle cx="1099.98" cy="205.65" r="3.8" class="pt"/>
<circle cx="1104.00" cy="258.75" r="3.8" class="pt"/>
<line x1="412" y1="472" x2="1112" y2="472" class="hg"/>
<line x1="412" y1="517" x2="1112" y2="517" class="hg"/>
<line x1="412" y1="562" x2="1112" y2="562" class="hg"/>
<line x1="412" y1="607" x2="1112" y2="607" class="hg"/>
<line x1="412" y1="652" x2="1112" y2="652" class="hg"/>
<line x1="420.00" y1="466" x2="420.00" y2="658" class="vg"/>
<line x1="424.02" y1="466" x2="424.02" y2="658" class="vg"/>
<line x1="428.05" y1="466" x2="428.05" y2="658" class="vg"/>
<line x1="432.07" y1="466" x2="432.07" y2="658" class="vg"/>
<line x1="436.09" y1="466" x2="436.09" y2="658" class="vg"/>
<line x1="440.12" y1="466" x2="440.12" y2="658" class="vg"/>
<line x1="444.14" y1="466" x2="444.14" y2="658" class="vg"/>
<line x1="448.16" y1="466" x2="448.16" y2="658" class="vg"/>
<line x1="452.19" y1="466" x2="452.19" y2="658" class="vg"/>
<line x1="456.21" y1="466" x2="456.21" y2="658" class="vg"/>
<line x1="460.24" y1="466" x2="460.24" y2="658" class="vg"/>
<line x1="464.26" y1="466" x2="464.26" y2="658" class="vg"/>
<line x1="468.28" y1="466" x2="468.28" y2="658" class="vg"/>
<line x1="472.31" y1="466" x2="472.31" y2="658" class="vg"/>
<line x1="476.33" y1="466" x2="476.33" y2="658" class="vg"/>
<line x1="480.35" y1="466" x2="480.35" y2="658" class="vg"/>
<line x1="484.38" y1="466" x2="484.38" y2="658" class="vg"/>
<line x1="488.40" y1="466" x2="488.40" y2="658" class="vg"/>
<line x1="492.42" y1="466" x2="492.42" y2="658" class="vg"/>
<line x1="496.45" y1="466" x2="496.45" y2="658" class="vg"/>
<line x1="500.47" y1="466" x2="500.47" y2="658" class="vg"/>
<line x1="504.49" y1="466" x2="504.49" y2="658" class="vg"/>
<line x1="508.52" y1="466" x2="508.52" y2="658" class="vg"/>
<line x1="512.54" y1="466" x2="512.54" y2="658" class="vg"/>
<line x1="516.56" y1="466" x2="516.56" y2="658" class="vg"/>
<line x1="520.59" y1="466" x2="520.59" y2="658" class="vg"/>
<line x1="524.61" y1="466" x2="524.61" y2="658" class="vg"/>
<line x1="528.64" y1="466" x2="528.64" y2="658" class="vg"/>
<line x1="532.66" y1="466" x2="532.66" y2="658" class="vg"/>
<line x1="536.68" y1="466" x2="536.68" y2="658" class="vg"/>
<line x1="540.71" y1="466" x2="540.71" y2="658" class="vg"/>
<line x1="544.73" y1="466" x2="544.73" y2="658" class="vg"/>
<line x1="548.75" y1="466" x2="548.75" y2="658" class="vg"/>
<line x1="552.78" y1="466" x2="552.78" y2="658" class="vg"/>
<line x1="556.80" y1="466" x2="556.80" y2="658" class="vg"/>
<line x1="560.82" y1="466" x2="560.82" y2="658" class="vg"/>
<line x1="564.85" y1="466" x2="564.85" y2="658" class="vg"/>
<line x1="568.87" y1="466" x2="568.87" y2="658" class="vg"/>
<line x1="572.89" y1="466" x2="572.89" y2="658" class="vg"/>
<line x1="576.92" y1="466" x2="576.92" y2="658" class="vg"/>
<line x1="580.94" y1="466" x2="580.94" y2="658" class="vg"/>
<line x1="584.96" y1="466" x2="584.96" y2="658" class="vg"/>
<line x1="588.99" y1="466" x2="588.99" y2="658" class="vg"/>
<line x1="593.01" y1="466" x2="593.01" y2="658" class="vg"/>
<line x1="597.04" y1="466" x2="597.04" y2="658" class="vg"/>
<line x1="601.06" y1="466" x2="601.06" y2="658" class="vg"/>
<line x1="605.08" y1="466" x2="605.08" y2="658" class="vg"/>
<line x1="609.11" y1="466" x2="609.11" y2="658" class="vg"/>
<line x1="613.13" y1="466" x2="613.13" y2="658" class="vg"/>
<line x1="617.15" y1="466" x2="617.15" y2="658" class="vg"/>
<line x1="621.18" y1="466" x2="621.18" y2="658" class="vg"/>
<line x1="625.20" y1="466" x2="625.20" y2="658" class="vg"/>
<line x1="629.22" y1="466" x2="629.22" y2="658" class="vg"/>
<line x1="633.25" y1="466" x2="633.25" y2="658" class="vg"/>
<line x1="637.27" y1="466" x2="637.27" y2="658" class="vg"/>
<line x1="641.29" y1="466" x2="641.29" y2="658" class="vg"/>
<line x1="645.32" y1="466" x2="645.32" y2="658" class="vg"/>
<line x1="649.34" y1="466" x2="649.34" y2="658" class="vg"/>
<line x1="653.36" y1="466" x2="653.36" y2="658" class="vg"/>
<line x1="657.39" y1="466" x2="657.39" y2="658" class="vg"/>
<line x1="661.41" y1="466" x2="661.41" y2="658" class="vg"/>
<line x1="665.44" y1="466" x2="665.44" y2="658" class="vg"/>
<line x1="669.46" y1="466" x2="669.46" y2="658" class="vg"/>
<line x1="673.48" y1="466" x2="673.48" y2="658" class="vg"/>
<line x1="677.51" y1="466" x2="677.51" y2="658" class="vg"/>
<line x1="681.53" y1="466" x2="681.53" y2="658" class="vg"/>
<line x1="685.55" y1="466" x2="685.55" y2="658" class="vg"/>
<line x1="689.58" y1="466" x2="689.58" y2="658" class="vg"/>
<line x1="693.60" y1="466" x2="693.60" y2="658" class="vg"/>
<line x1="697.62" y1="466" x2="697.62" y2="658" class="vg"/>
<line x1="701.65" y1="466" x2="701.65" y2="658" class="vg"/>
<line x1="705.67" y1="466" x2="705.67" y2="658" class="vg"/>
<line x1="709.69" y1="466" x2="709.69" y2="658" class="vg"/>
<line x1="713.72" y1="466" x2="713.72" y2="658" class="vg"/>
<line x1="717.74" y1="466" x2="717.74" y2="658" class="vg"/>
<line x1="721.76" y1="466" x2="721.76" y2="658" class="vg"/>
<line x1="725.79" y1="466" x2="725.79" y2="658" class="vg"/>
<line x1="729.81" y1="466" x2="729.81" y2="658" class="vg"/>
<line x1="733.84" y1="466" x2="733.84" y2="658" class="vg"/>
<line x1="737.86" y1="466" x2="737.86" y2="658" class="vg"/>
<line x1="741.88" y1="466" x2="741.88" y2="658" class="vg"/>
<line x1="745.91" y1="466" x2="745.91" y2="658" class="vg"/>
<line x1="749.93" y1="466" x2="749.93" y2="658" class="vg"/>
<line x1="753.95" y1="466" x2="753.95" y2="658" class="vg"/>
<line x1="757.98" y1="466" x2="757.98" y2="658" class="vg"/>
<line x1="762.00" y1="466" x2="762.00" y2="658" class="vg"/>
<line x1="766.02" y1="466" x2="766.02" y2="658" class="vg"/>
<line x1="770.05" y1="466" x2="770.05" y2="658" class="vg"/>
<line x1="774.07" y1="466" x2="774.07" y2="658" class="vg"/>
<line x1="778.09" y1="466" x2="778.09" y2="658" class="vg"/>
<line x1="782.12" y1="466" x2="782.12" y2="658" class="vg"/>
<line x1="786.14" y1="466" x2="786.14" y2="658" class="vg"/>
<line x1="790.16" y1="466" x2="790.16" y2="658" class="vg"/>
<line x1="794.19" y1="466" x2="794.19" y2="658" class="vg"/>
<line x1="798.21" y1="466" x2="798.21" y2="658" class="vg"/>
<line x1="802.24" y1="466" x2="802.24" y2="658" class="vg"/>
<line x1="806.26" y1="466" x2="806.26" y2="658" class="vg"/>
<line x1="810.28" y1="466" x2="810.28" y2="658" class="vg"/>
<line x1="814.31" y1="466" x2="814.31" y2="658" class="vg"/>
<line x1="818.33" y1="466" x2="818.33" y2="658" class="vg"/>
<line x1="822.35" y1="466" x2="822.35" y2="658" class="vg"/>
<line x1="826.38" y1="466" x2="826.38" y2="658" class="vg"/>
<line x1="830.40" y1="466" x2="830.40" y2="658" class="vg"/>
<line x1="834.42" y1="466" x2="834.42" y2="658" class="vg"/>
<line x1="838.45" y1="466" x2="838.45" y2="658" class="vg"/>
<line x1="842.47" y1="466" x2="842.47" y2="658" class="vg"/>
<line x1="846.49" y1="466" x2="846.49" y2="658" class="vg"/>
<line x1="850.52" y1="466" x2="850.52" y2="658" class="vg"/>
<line x1="854.54" y1="466" x2="854.54" y2="658" class="vg"/>
<line x1="858.56" y1="466" x2="858.56" y2="658" class="vg"/>
<line x1="862.59" y1="466" x2="862.59" y2="658" class="vg"/>
<line x1="866.61" y1="466" x2="866.61" y2="658" class="vg"/>
<line x1="870.64" y1="466" x2="870.64" y2="658" class="vg"/>
<line x1="874.66" y1="466" x2="874.66" y2="658" class="vg"/>
<line x1="878.68" y1="466" x2="878.68" y2="658" class="vg"/>
<line x1="882.71" y1="466" x2="882.71" y2="658" class="vg"/>
<line x1="886.73" y1="466" x2="886.73" y2="658" class="vg"/>
<line x1="890.75" y1="466" x2="890.75" y2="658" class="vg"/>
<line x1="894.78" y1="466" x2="894.78" y2="658" class="vg"/>
<line x1="898.80" y1="466" x2="898.80" y2="658" class="vg"/>
<line x1="902.82" y1="466" x2="902.82" y2="658" class="vg"/>
<line x1="906.85" y1="466" x2="906.85" y2="658" class="vg"/>
<line x1="910.87" y1="466" x2="910.87" y2="658" class="vg"/>
<line x1="914.89" y1="466" x2="914.89" y2="658" class="vg"/>
<line x1="918.92" y1="466" x2="918.92" y2="658" class="vg"/>
<line x1="922.94" y1="466" x2="922.94" y2="658" class="vg"/>
<line x1="926.96" y1="466" x2="926.96" y2="658" class="vg"/>
<line x1="930.99" y1="466" x2="930.99" y2="658" class="vg"/>
<line x1="935.01" y1="466" x2="935.01" y2="658" class="vg"/>
<line x1="939.04" y1="466" x2="939.04" y2="658" class="vg"/>
<line x1="943.06" y1="466" x2="943.06" y2="658" class="vg"/>
<line x1="947.08" y1="466" x2="947.08" y2="658" class="vg"/>
<line x1="951.11" y1="466" x2="951.11" y2="658" class="vg"/>
<line x1="955.13" y1="466" x2="955.13" y2="658" class="vg"/>
<line x1="959.15" y1="466" x2="959.15" y2="658" class="vg"/>
<line x1="963.18" y1="466" x2="963.18" y2="658" class="vg"/>
<line x1="967.20" y1="466" x2="967.20" y2="658" class="vg"/>
<line x1="971.22" y1="466" x2="971.22" y2="658" class="vg"/>
<line x1="975.25" y1="466" x2="975.25" y2="658" class="vg"/>
<line x1="979.27" y1="466" x2="979.27" y2="658" class="vg"/>
<line x1="983.29" y1="466" x2="983.29" y2="658" class="vg"/>
<line x1="987.32" y1="466" x2="987.32" y2="658" class="vg"/>
<line x1="991.34" y1="466" x2="991.34" y2="658" class="vg"/>
<line x1="995.36" y1="466" x2="995.36" y2="658" class="vg"/>
<line x1="999.39" y1="466" x2="999.39" y2="658" class="vg"/>
<line x1="1003.41" y1="466" x2="1003.41" y2="658" class="vg"/>
<line x1="1007.44" y1="466" x2="1007.44" y2="658" class="vg"/>
<line x1="1011.46" y1="466" x2="1011.46" y2="658" class="vg"/>
<line x1="1015.48" y1="466" x2="1015.48" y2="658" class="vg"/>
<line x1="1019.51" y1="466" x2="1019.51" y2="658" class="vg"/>
<line x1="1023.53" y1="466" x2="1023.53" y2="658" class="vg"/>
<line x1="1027.55" y1="466" x2="1027.55" y2="658" class="vg"/>
<line x1="1031.58" y1="466" x2="1031.58" y2="658" class="vg"/>
<line x1="1035.60" y1="466" x2="1035.60" y2="658" class="vg"/>
<line x1="1039.62" y1="466" x2="1039.62" y2="658" class="vg"/>
<line x1="1043.65" y1="466" x2="1043.65" y2="658" class="vg"/>
<line x1="1047.67" y1="466" x2="1047.67" y2="658" class="vg"/>
<line x1="1051.69" y1="466" x2="1051.69" y2="658" class="vg"/>
<line x1="1055.72" y1="466" x2="1055.72" y2="658" class="vg"/>
<line x1="1059.74" y1="466" x2="1059.74" y2="658" class="vg"/>
<line x1="1063.76" y1="466" x2="1063.76" y2="658" class="vg"/>
<line x1="1067.79" y1="466" x2="1067.79" y2="658" class="vg"/>
<line x1="1071.81" y1="466" x2="1071.81" y2="658" class="vg"/>
<line x1="1075.84" y1="466" x2="1075.84" y2="658" class="vg"/>
<line x1="1079.86" y1="466" x2="1079.86" y2="658" class="vg"/>
<line x1="1083.88" y1="466" x2="1083.88" y2="658" class="vg"/>
<line x1="1087.91" y1="466" x2="1087.91" y2="658" class="vg"/>
<line x1="1091.93" y1="466" x2="1091.93" y2="658" class="vg"/>
<line x1="1095.95" y1="466" x2="1095.95" y2="658" class="vg"/>
<line x1="1099.98" y1="466" x2="1099.98" y2="658" class="vg"/>
<line x1="1104.00" y1="466" x2="1104.00" y2="658" class="vg"/>
<text x="408" y="475.2" text-anchor="end" class="yl">200</text>
<text x="408" y="520.2" text-anchor="end" class="yl">150</text>
<text x="408" y="565.2" text-anchor="end" class="yl">100</text>
<text x="408" y="610.2" text-anchor="end" class="yl">50</text>
<text x="408" y="655.2" text-anchor="end" class="yl">0</text>
<text x="420.00" y="671.8" text-anchor="middle" class="xl">02 Mar</text>
<text x="472.31" y="671.8" text-anchor="middle" class="xl">15 Mar</text>
<text x="540.71" y="671.8" text-anchor="middle" class="xl">01 Apr</text>
<text x="597.04" y="671.8" text-anchor="middle" class="xl">15 Apr</text>
<text x="661.41" y="671.8" text-anchor="middle" class="xl">01 May</text>
<text x="717.74" y="671.8" text-anchor="middle" class="xl">15 May</text>
<text x="786.14" y="671.8" text-anchor="middle" class="xl">01 Jun</text>
<text x="842.47" y="671.8" text-anchor="middle" class="xl">15 Jun</text>
<text x="906.85" y="671.8" text-anchor="middle" class="xl">01 Jul</text>
<text x="963.18" y="671.8" text-anchor="middle" class="xl">15 Jul</text>
<text x="1031.58" y="671.8" text-anchor="middle" class="xl">01 Aug</text>
<text x="1104.00" y="671.8" text-anchor="middle" class="xl">19 Aug</text>
<polyline points="420.00,602.86 424.02,602.85 428.05,602.84 432.07,602.83 436.09,602.82 440.12,602.80 444.14,602.79 448.16,602.78 452.19,602.77 456.21,602.76 460.24,602.75 464.26,602.74 468.28,602.73 472.31,602.71 476.33,602.70 480.35,602.69 484.38,602.68 488.40,602.67 492.42,602.66 496.45,602.65 500.47,602.63 504.49,602.62 508.52,602.61 512.54,602.60 516.56,602.59 520.59,602.58 524.61,602.57 528.64,602.56 532.66,602.54 536.68,602.53 540.71,602.52 544.73,602.51 548.75,602.50 552.78,602.43 556.80,602.37 560.82,602.30 564.85,602.23 568.87,602.16 572.89,602.10 576.92,602.03 580.94,601.96 584.96,601.88 588.99,601.80 593.01,601.71 597.04,601.63 601.06,601.55 605.08,601.47 609.11,601.38 613.13,601.30 617.15,601.22 621.18,601.14 625.20,601.06 629.22,600.97 633.25,600.89 637.27,600.81 641.29,600.73 645.32,600.65 649.34,600.56 653.36,600.48 657.39,600.40 661.41,600.32 665.44,600.23 669.46,600.15 673.48,600.07 677.51,599.96 681.53,599.85 685.55,599.74 689.58,599.63 693.60,599.52 697.62,599.41 701.65,599.30 705.67,599.20 709.69,599.09 713.72,598.98 717.74,598.87 721.76,598.76 725.79,598.65 729.81,598.54 733.84,598.30 737.86,598.06 741.88,597.82 745.91,577.93 749.93,577.93 753.95,577.93 757.98,577.93 762.00,577.93 766.02,576.22 770.05,576.22 774.07,576.22 778.09,576.22 782.12,576.22 786.14,576.22 790.16,576.22 794.19,576.22 798.21,576.22 802.24,576.22 806.26,576.22 810.28,576.22 814.31,576.22 818.33,576.22 822.35,576.22 826.38,576.22 830.40,576.22 834.42,576.22 838.45,576.22 842.47,576.22 846.49,576.22 850.52,576.22 854.54,576.22 858.56,573.52 862.59,563.62 866.61,563.62 870.64,563.62 874.66,563.62 878.68,563.62 882.71,561.91 886.73,553.45 890.75,553.45 894.78,553.45 898.80,553.45 902.82,553.45 906.85,550.30 910.87,512.05 914.89,512.05 918.92,512.05 922.94,512.05 926.96,512.05 930.99,512.05 935.01,505.48 939.04,505.48 943.06,496.57 947.08,495.58 951.11,495.58 955.13,495.58 959.15,495.58 963.18,495.58 967.20,495.58 971.22,495.58 975.25,494.05 979.27,494.05 983.29,494.05 987.32,494.05 991.34,494.05 995.36,494.05 999.39,494.05 1003.41,494.05 1007.44,494.05 1011.46,494.05 1015.48,491.80 1019.51,491.80 1023.53,491.80 1027.55,491.80 1031.58,491.80 1035.60,491.80 1039.62,491.80 1043.65,491.80 1047.67,491.80 1051.69,491.80 1055.72,491.80 1059.74,491.80 1063.76,491.80 1067.79,491.80 1071.81,491.80 1075.84,491.80 1079.86,491.80 1083.88,491.80 1087.91,491.80 1091.93,491.80 1095.95,491.80 1099.98,491.80 1104.00,491.80" class="ln"/>
<circle cx="420.00" cy="602.86" r="3.8" class="pt"/>
<circle cx="424.02" cy="602.85" r="3.8" class="pt"/>
<circle cx="428.05" cy="602.84" r="3.8" class="pt"/>
<circle cx="432.07" cy="602.83" r="3.8" class="pt"/>
<circle cx="436.09" cy="602.82" r="3.8" class="pt"/>
<circle cx="440.12" cy="602.80" r="3.8" class="pt"/>
<circle cx="444.14" cy="602.79" r="3.8" class="pt"/>
<circle cx="448.16" cy="602.78" r="3.8" class="pt"/>
<circle cx="452.19" cy="602.77" r="3.8" class="pt"/>
<circle cx="456.21" cy="602.76" r="3.8" class="pt"/>
<circle cx="460.24" cy="602.75" r="3.8" class="pt"/>
<circle cx="464.26" cy="602.74" r="3.8" class="pt"/>
<circle cx="468.28" cy="602.73" r="3.8" class="pt"/>
<circle cx="472.31" cy="602.71" r="3.8" class="pt"/>
<circle cx="476.33" cy="602.70" r="3.8" class="pt"/>
<circle cx="480.35" cy="602.69" r="3.8" class="pt"/>
<circle cx="484.38" cy="602.68" r="3.8" class="pt"/>
<circle cx="488.40" cy="602.67" r="3.8" class="pt"/>
<circle cx="492.42" cy="602.66" r="3.8" class="pt"/>
<circle cx="496.45" cy="602.65" r="3.8" class="pt"/>
<circle cx="500.47" cy="602.63" r="3.8" class="pt"/>
<circle cx="504.49" cy="602.62" r="3.8" class="pt"/>
<circle cx="508.52" cy="602.61" r="3.8" class="pt"/>
<circle cx="512.54" cy="602.60" r="3.8" class="pt"/>
<circle cx="516.56" cy="602.59" r="3.8" class="pt"/>
<circle cx="520.59" cy="602.58" r="3.8" class="pt"/>
<circle cx="524.61" cy="602.57" r="3.8" class="pt"/>
<circle cx="528.64" cy="602.56" r="3.8" class="pt"/>
<circle cx="532.66" cy="602.54" r="3.8" class="pt"/>
<circle cx="536.68" cy="602.53" r="3.8" class="pt"/>
<circle cx="540.71" cy="602.52" r="3.8" class="pt"/>
<circle cx="544.73" cy="602.51" r="3.8" class="pt"/>
<circle cx="548.75" cy="602.50" r="3.8" class="pt"/>
<circle cx="552.78" cy="602.43" r="3.8" class="pt"/>
<circle cx="556.80" cy="602.37" r="3.8" class="pt"/>
<circle cx="560.82" cy="602.30" r="3.8" class="pt"/>
<circle cx="564.85" cy="602.23" r="3.8" class="pt"/>
<circle cx="568.87" cy="602.16" r="3.8" class="pt"/>
<circle cx="572.89" cy="602.10" r="3.8" class="pt"/>
<circle cx="576.92" cy="602.03" r="3.8" class="pt"/>
<circle cx="580.94" cy="601.96" r="3.8" class="pt"/>
<circle cx="584.96" cy="601.88" r="3.8" class="pt"/>
<circle cx="588.99" cy="601.80" r="3.8" class="pt"/>
<circle cx="593.01" cy="601.71" r="3.8" class="pt"/>
<circle cx="597.04" cy="601.63" r="3.8" class="pt"/>
<circle cx="601.06" cy="601.55" r="3.8" class="pt"/>
<circle cx="605.08" cy="601.47" r="3.8" class="pt"/>
<circle cx="609.11" cy="601.38" r="3.8" class="pt"/>
<circle cx="613.13" cy="601.30" r="3.8" class="pt"/>
<circle cx="617.15" cy="601.22" r="3.8" class="pt"/>
<circle cx="621.18" cy="601.14" r="3.8" class="pt"/>
<circle cx="625.20" cy="601.06" r="3.8" class="pt"/>
<circle cx="629.22" cy="600.97" r="3.8" class="pt"/>
<circle cx="633.25" cy="600.89" r="3.8" class="pt"/>
<circle cx="637.27" cy="600.81" r="3.8" class="pt"/>
<circle cx="641.29" cy="600.73" r="3.8" class="pt"/>
<circle cx="645.32" cy="600.65" r="3.8" class="pt"/>
<circle cx="649.34" cy="600.56" r="3.8" class="pt"/>
<circle cx="653.36" cy="600.48" r="3.8" class="pt"/>
<circle cx="657.39" cy="600.40" r="3.8" class="pt"/>
<circle cx="661.41" cy="600.32" r="3.8" class="pt"/>
<circle cx="665.44" cy="600.23" r="3.8" class="pt"/>
<circle cx="669.46" cy="600.15" r="3.8" class="pt"/>
<circle cx="673.48" cy="600.07" r="3.8" class="pt"/>
<circle cx="677.51" cy="599.96" r="3.8" class="pt"/>
<circle cx="681.53" cy="599.85" r="3.8" class="pt"/>
<circle cx="685.55" cy="599.74" r="3.8" class="pt"/>
<circle cx="689.58" cy="599.63" r="3.8" class="pt"/>
<circle cx="693.60" cy="599.52" r="3.8" class="pt"/>
<circle cx="697.62" cy="599.41" r="3.8" class="pt"/>
<circle cx="701.65" cy="599.30" r="3.8" class="pt"/>
<circle cx="705.67" cy="599.20" r="3.8" class="pt"/>
<circle cx="709.69" cy="599.09" r="3.8" class="pt"/>
<circle cx="713.72" cy="598.98" r="3.8" class="pt"/>
<circle cx="717.74" cy="598.87" r="3.8" class="pt"/>
<circle cx="721.76" cy="598.76" r="3.8" class="pt"/>
<circle cx="725.79" cy="598.65" r="3.8" class="pt"/>
<circle cx="729.81" cy="598.54" r="3.8" class="pt"/>
<circle cx="733.84" cy="598.30" r="3.8" class="pt"/>
<circle cx="737.86" cy="598.06" r="3.8" class="pt"/>
<circle cx="741.88" cy="597.82" r="3.8" class="pt"/>
<circle cx="745.91" cy="577.93" r="3.8" class="pt"/>
<circle cx="749.93" cy="577.93" r="3.8" class="pt"/>
<circle cx="753.95" cy="577.93" r="3.8" class="pt"/>
<circle cx="757.98" cy="577.93" r="3.8" class="pt"/>
<circle cx="762.00" cy="577.93" r="3.8" class="pt"/>
<circle cx="766.02" cy="576.22" r="3.8" class="pt"/>
<circle cx="770.05" cy="576.22" r="3.8" class="pt"/>
<circle cx="774.07" cy="576.22" r="3.8" class="pt"/>
<circle cx="778.09" cy="576.22" r="3.8" class="pt"/>
<circle cx="782.12" cy="576.22" r="3.8" class="pt"/>
<circle cx="786.14" cy="576.22" r="3.8" class="pt"/>
<circle cx="790.16" cy="576.22" r="3.8" class="pt"/>
<circle cx="794.19" cy="576.22" r="3.8" class="pt"/>
<circle cx="798.21" cy="576.22" r="3.8" class="pt"/>
<circle cx="802.24" cy="576.22" r="3.8" class="pt"/>
<circle cx="806.26" cy="576.22" r="3.8" class="pt"/>
<circle cx="810.28" cy="576.22" r="3.8" class="pt"/>
<circle cx="814.31" cy="576.22" r="3.8" class="pt"/>
<circle cx="818.33" cy="576.22" r="3.8" class="pt"/>
<circle cx="822.35" cy="576.22" r="3.8" class="pt"/>
<circle cx="826.38" cy="576.22" r="3.8" class="pt"/>
<circle cx="830.40" cy="576.22" r="3.8" class="pt"/>
<circle cx="834.42" cy="576.22" r="3.8" class="pt"/>
<circle cx="838.45" cy="576.22" r="3.8" class="pt"/>
<circle cx="842.47" cy="576.22" r="3.8" class="pt"/>
<circle cx="846.49" cy="576.22" r="3.8" class="pt"/>
<circle cx="850.52" cy="576.22" r="3.8" class="pt"/>
<circle cx="854.54" cy="576.22" r="3.8" class="pt"/>
<circle cx="858.56" cy="573.52" r="3.8" class="pt"/>
<circle cx="862.59" cy="563.62" r="3.8" class="pt"/>
<circle cx="866.61" cy="563.62" r="3.8" class="pt"/>
<circle cx="870.64" cy="563.62" r="3.8" class="pt"/>
<circle cx="874.66" cy="563.62" r="3.8" class="pt"/>
<circle cx="878.68" cy="563.62" r="3.8" class="pt"/>
<circle cx="882.71" cy="561.91" r="3.8" class="pt"/>
<circle cx="886.73" cy="553.45" r="3.8" class="pt"/>
<circle cx="890.75" cy="553.45" r="3.8" class="pt"/>
<circle cx="894.78" cy="553.45" r="3.8" class="pt"/>
<circle cx="898.80" cy="553.45" r="3.8" class="pt"/>
<circle cx="902.82" cy="553.45" r="3.8" class="pt"/>
<circle cx="906.85" cy="550.30" r="3.8" class="pt"/>
<circle cx="910.87" cy="512.05" r="3.8" class="pt"/>
<circle cx="914.89" cy="512.05" r="3.8" class="pt"/>
<circle cx="918.92" cy="512.05" r="3.8" class="pt"/>
<circle cx="922.94" cy="512.05" r="3.8" class="pt"/>
<circle cx="926.96" cy="512.05" r="3.8" class="pt"/>
<circle cx="930.99" cy="512.05" r="3.8" class="pt"/>
<circle cx="935.01" cy="505.48" r="3.8" class="pt"/>
<circle cx="939.04" cy="505.48" r="3.8" class="pt"/>
<circle cx="943.06" cy="496.57" r="3.8" class="pt"/>
<circle cx="947.08" cy="495.58" r="3.8" class="pt"/>
<circle cx="951.11" cy="495.58" r="3.8" class="pt"/>
<circle cx="955.13" cy="495.58" r="3.8" class="pt"/>
<circle cx="959.15" cy="495.58" r="3.8" class="pt"/>
<circle cx="963.18" cy="495.58" r="3.8" class="pt"/>
<circle cx="967.20" cy="495.58" r="3.8" class="pt"/>
<circle cx="971.22" cy="495.58" r="3.8" class="pt"/>
<circle cx="975.25" cy="494.05" r="3.8" class="pt"/>
<circle cx="979.27" cy="494.05" r="3.8" class="pt"/>
<circle cx="983.29" cy="494.05" r="3.8" class="pt"/>
<circle cx="987.32" cy="494.05" r="3.8" class="pt"/>
<circle cx="991.34" cy="494.05" r="3.8" class="pt"/>
<circle cx="995.36" cy="494.05" r="3.8" class="pt"/>
<circle cx="999.39" cy="494.05" r="3.8" class="pt"/>
<circle cx="1003.41" cy="494.05" r="3.8" class="pt"/>
<circle cx="1007.44" cy="494.05" r="3.8" class="pt"/>
<circle cx="1011.46" cy="494.05" r="3.8" class="pt"/>
<circle cx="1015.48" cy="491.80" r="3.8" class="pt"/>
<circle cx="1019.51" cy="491.80" r="3.8" class="pt"/>
<circle cx="1023.53" cy="491.80" r="3.8" class="pt"/>
<circle cx="1027.55" cy="491.80" r="3.8" class="pt"/>
<circle cx="1031.58" cy="491.80" r="3.8" class="pt"/>
<circle cx="1035.60" cy="491.80" r="3.8" class="pt"/>
<circle cx="1039.62" cy="491.80" r="3.8" class="pt"/>
<circle cx="1043.65" cy="491.80" r="3.8" class="pt"/>
<circle cx="1047.67" cy="491.80" r="3.8" class="pt"/>
<circle cx="1051.69" cy="491.80" r="3.8" class="pt"/>
<circle cx="1055.72" cy="491.80" r="3.8" class="pt"/>
<circle cx="1059.74" cy="491.80" r="3.8" class="pt"/>
<circle cx="1063.76" cy="491.80" r="3.8" class="pt"/>
<circle cx="1067.79" cy="491.80" r="3.8" class="pt"/>
<circle cx="1071.81" cy="491.80" r="3.8" class="pt"/>
<circle cx="1075.84" cy="491.80" r="3.8" class="pt"/>
<circle cx="1079.86" cy="491.80" r="3.8" class="pt"/>
<circle cx="1083.88" cy="491.80" r="3.8" class="pt"/>
<circle cx="1087.91" cy="491.80" r="3.8" class="pt"/>
<circle cx="1091.93" cy="491.80" r="3.8" class="pt"/>
<circle cx="1095.95" cy="491.80" r="3.8" class="pt"/>
<circle cx="1099.98" cy="491.80" r="3.8" class="pt"/>
<circle cx="1104.00" cy="491.80" r="3.8" class="pt"/>
</svg>
<div class="red" style="left:0;top:390px;width:132px;height:40px"></div>
<div class="red" style="left:179px;top:130px;width:111px;height:40px"></div>
<div class="red" style="left:366px;top:400px;width:778px;height:300px"></div>
</body></html>
